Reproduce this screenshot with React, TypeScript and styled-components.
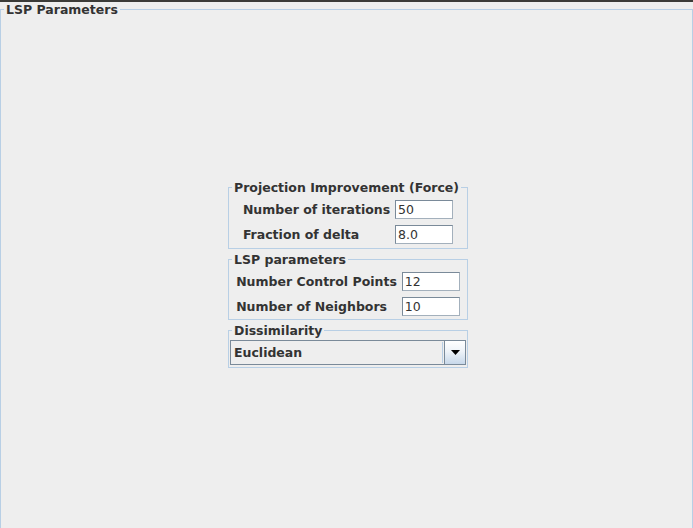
import React from 'react';
import styled, { createGlobalStyle } from 'styled-components';

const GlobalStyle = createGlobalStyle`
  html, body {
    margin: 0;
    padding: 0;
    background: #eeeeee;
    overflow: hidden;
  }
  body {
    font-family: "DejaVu Sans", "Liberation Sans", sans-serif;
    font-size: 12.5px;
    color: #333333;
  }
`;

function App() {
  return (
    <>
      <GlobalStyle />
      <TopBar />
      <OuterPanel>
        <Title $offset={3}>LSP Parameters</Title>
        <Content>
          <Stack>
            <Group $bottom={4}>
              <Title $offset={2}>Projection Improvement (Force)</Title>
              <FormGrid>
                <Label>Number of iterations</Label>
                <Field defaultValue="50" />
                <Label>Fraction of delta</Label>
                <Field defaultValue="8.0" />
              </FormGrid>
            </Group>
            <Group $bottom={3}>
              <Title $offset={2}>LSP parameters</Title>
              <FormGrid>
                <Label>Number Control Points</Label>
                <Field defaultValue="12" />
                <Label>Number of Neighbors</Label>
                <Field defaultValue="10" />
              </FormGrid>
            </Group>
            <Group $bottom={2}>
              <Title $offset={2}>Dissimilarity</Title>
              <Combo>
                <ComboValue>Euclidean</ComboValue>
                <ComboArrow>
                  <svg width="9" height="5" viewBox="0 0 9 5">
                    <path d="M0 0 H9 L4.5 5 Z" fill="#000" />
                  </svg>
                </ComboArrow>
              </Combo>
            </Group>
          </Stack>
        </Content>
      </OuterPanel>
    </>
  );
}

const TopBar = styled.div`
  height: 2px;
  background: #3b3b38;
`;

const OuterPanel = styled.fieldset`
  box-sizing: border-box;
  width: 693px;
  margin: 0;
  padding: 0;
  border: 1px solid #b8cfe5;
  border-bottom: none;
  min-width: 0;
`;

const Title = styled.legend<{ $offset: number }>`
  margin-left: ${(p) => p.$offset}px;
  padding: 0 2px;
  font-weight: bold;
  font-size: 12.5px;
  line-height: 15px;
  color: #333333;
`;

const Content = styled.div`
  height: 514px;
  padding-left: 3px;
  display: flex;
  align-items: center;
  justify-content: center;
`;

const Stack = styled.div`
  width: 240px;
  display: flex;
  flex-direction: column;
  gap: 3px;
`;

const Group = styled.fieldset<{ $bottom: number }>`
  margin: 0;
  padding: 0 1px ${(p) => p.$bottom}px;
  border: 1px solid #b8cfe5;
  min-width: 0;
`;

const FormGrid = styled.div`
  display: grid;
  grid-template-columns: auto 58px;
  column-gap: 5px;
  row-gap: 6px;
  justify-content: center;
  align-items: center;
  padding-top: 5px;
`;

const Label = styled.span`
  font-weight: bold;
  white-space: nowrap;
`;

const Field = styled.input`
  box-sizing: border-box;
  width: 58px;
  height: 19px;
  margin: 0;
  padding: 0 2px;
  border: 1px solid #7a8a99;
  border-right-color: #a3b0bc;
  border-bottom-color: #a3b0bc;
  background: #ffffff;
  font-family: "DejaVu Sans", "Liberation Sans", sans-serif;
  font-size: 12.5px;
  color: #333333;
  outline: none;
`;

const Combo = styled.div`
  box-sizing: border-box;
  height: 25px;
  margin-top: 2px;
  display: flex;
  border: 1px solid #7a8a99;
  background: #eeeeee;
`;

const ComboValue = styled.div`
  flex: 1;
  display: flex;
  align-items: center;
  padding-left: 2px;
  font-weight: bold;
  border: 1px solid #eeeeee;
  box-shadow: inset -1px 0 0 #b8cfe5;
`;

const ComboArrow = styled.div`
  width: 20px;
  display: flex;
  align-items: center;
  justify-content: center;
  border-left: 1px solid #7a8a99;
  background: linear-gradient(#ffffff 0%, #eef3f8 45%, #c7d8ea 100%);
`;

export default App;
